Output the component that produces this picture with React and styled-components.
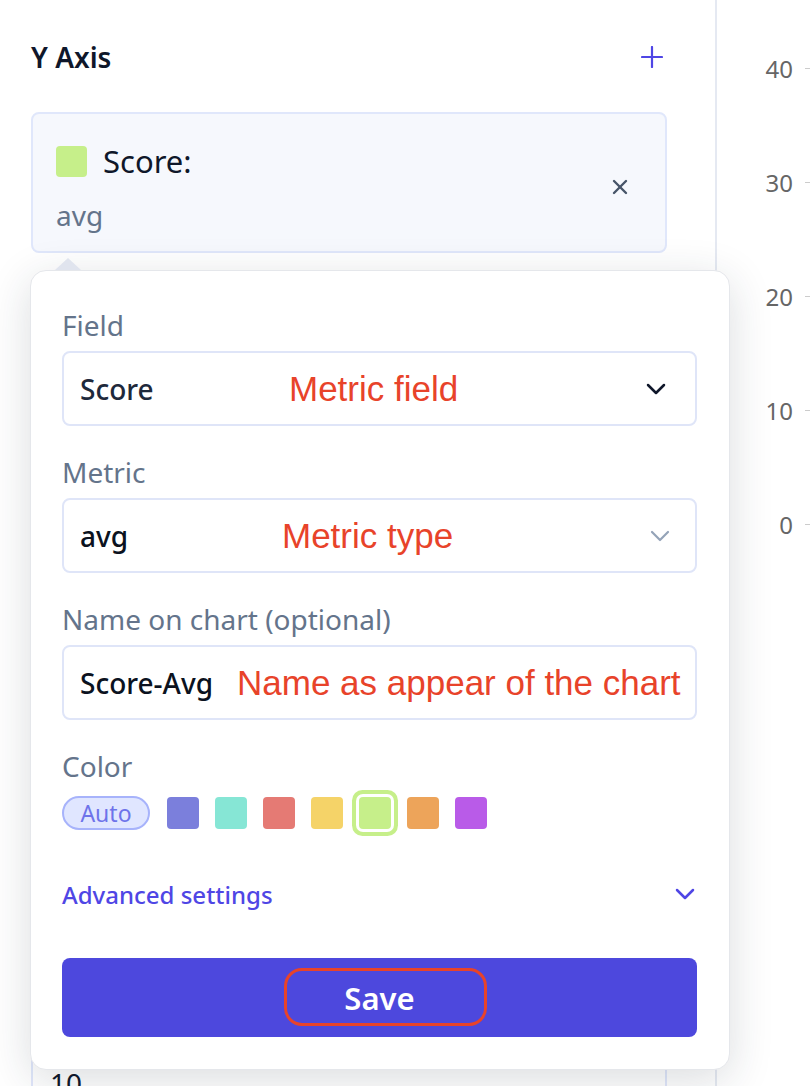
import React from 'react';
import styled, { createGlobalStyle } from 'styled-components';

const GlobalStyle = createGlobalStyle`
  html, body {
    margin: 0;
    padding: 0;
    background: #ffffff;
    font-family: 'Noto Sans', 'Open Sans', sans-serif;
    overflow: hidden;
  }
  * {
    box-sizing: border-box;
  }
`;

const Page = styled.div`
  display: flex;
  width: 810px;
  height: 1086px;
  overflow: hidden;
`;

const Sidebar = styled.div`
  width: 717px;
  flex-shrink: 0;
  display: flex;
  flex-direction: column;
  padding: 39px 48px 0 31px;
  border-right: 2px solid #e5e9f2;
`;

const Header = styled.div`
  display: flex;
  align-items: center;
  justify-content: space-between;
  height: 36px;
  padding-right: 4px;
`;

const Title = styled.div`
  font-size: 28px;
  font-weight: 600;
  color: #0f172a;
  line-height: 36px;
`;

const IconButton = styled.button`
  display: flex;
  align-items: center;
  justify-content: center;
  border: none;
  background: transparent;
  padding: 0;
  cursor: pointer;
  color: ${({ color }) => color || '#475569'};
`;

const SeriesSlot = styled.div`
  position: relative;
  margin-top: 37px;
`;

const SeriesCard = styled.div`
  display: flex;
  align-items: center;
  justify-content: space-between;
  background: #f6f8fd;
  border: 2px solid #e0e7fb;
  border-radius: 8px;
  padding: 26px 37px 18px 23px;
`;

const SeriesInfo = styled.div`
  display: flex;
  flex-direction: column;
  gap: 15px;
`;

const SeriesRow = styled.div`
  display: flex;
  align-items: center;
  gap: 16px;
  height: 42px;
`;

const Swatch = styled.span`
  display: block;
  width: ${({ size }) => size || 32}px;
  height: ${({ size }) => size || 32}px;
  border-radius: 4px;
  background: ${({ color }) => color};
  box-shadow: ${({ selected, color }) =>
    selected ? `0 0 0 3px #ffffff, 0 0 0 7px ${color}` : 'none'};
  flex-shrink: 0;
`;

const SeriesName = styled.span`
  font-size: 31px;
  font-weight: 400;
  color: #0f172a;
`;

const SeriesMetric = styled.span`
  font-size: 28px;
  line-height: 36px;
  color: #64748b;
`;

const Popover = styled.div`
  position: absolute;
  top: calc(100% + 17px);
  left: -1px;
  width: 700px;
  background: #ffffff;
  border: 1px solid #e5e7eb;
  border-radius: 16px;
  box-shadow: 0 10px 44px rgba(30, 41, 59, 0.16);
  padding: 36px 32px 32px 31px;
  display: flex;
  flex-direction: column;
  z-index: 2;
`;

const Arrow = styled.span`
  position: absolute;
  top: -13px;
  left: 24px;
  width: 0;
  height: 0;
  border-left: 13px solid transparent;
  border-right: 13px solid transparent;
  border-bottom: 12px solid #e0e4ee;
`;

const Group = styled.div`
  display: flex;
  flex-direction: column;
  gap: ${({ gap }) => gap || 8}px;
  margin-bottom: ${({ last }) => (last ? 0 : 28)}px;
`;

const Label = styled.div`
  font-size: 28px;
  line-height: 36px;
  color: #64748b;
`;

const Control = styled.div`
  position: relative;
  display: flex;
  align-items: center;
  justify-content: space-between;
  height: 75px;
  border: 2px solid #dfe5f8;
  border-radius: 8px;
  padding: 0 ${({ padRight }) => padRight || 29}px 0 16px;
`;

const Value = styled.span`
  font-size: 28px;
  font-weight: 500;
  color: ${({ dark }) => (dark ? '#0b1220' : '#1e293b')};
`;

const Note = styled.span`
  position: absolute;
  left: ${({ left }) => left}px;
  top: 50%;
  transform: translateY(-50%);
  font-family: 'Liberation Sans', Arial, sans-serif;
  font-size: 35px;
  color: #e8432a;
  white-space: nowrap;
`;

const SwatchRow = styled.div`
  display: flex;
  align-items: center;
  gap: 16px;
  height: 34px;
  margin-top: 2px;
`;

const AutoPill = styled.span`
  display: flex;
  align-items: center;
  justify-content: center;
  width: 88px;
  height: 34px;
  margin-right: 1px;
  border-radius: 17px;
  background: #e0e6ff;
  border: 2px solid #a7b3fb;
  font-size: 23px;
  color: #6e73ea;
`;

const Advanced = styled.div`
  display: flex;
  align-items: center;
  justify-content: space-between;
  height: 36px;
  margin-top: 46px;
  padding-right: 2px;
  color: #4f46e5;
  font-size: 24px;
  font-weight: 500;
`;

const SaveButton = styled.button`
  position: relative;
  margin-top: 46px;
  height: 79px;
  width: 100%;
  border: none;
  border-radius: 8px;
  background: #4d48dd;
  color: #ffffff;
  font-family: 'Noto Sans', sans-serif;
  font-size: 31px;
  font-weight: 600;
  cursor: pointer;
`;

const SaveMark = styled.span`
  position: absolute;
  left: 222px;
  top: 10px;
  width: 203px;
  height: 58px;
  border: 3px solid #e8432a;
  border-radius: 18px;
`;

const NextCard = styled.div`
  margin-top: 790px;
  border: 2px solid #e0e7fb;
  border-radius: 8px;
  padding: 20px 17px;
  font-size: 28px;
  line-height: 36px;
  color: #0f172a;
`;

const AxisColumn = styled.div`
  flex: 1;
  display: flex;
  flex-direction: column;
  padding-top: 11px;
`;

const Tick = styled.div`
  display: flex;
  align-items: center;
  justify-content: flex-end;
  gap: 12px;
  height: 114px;
  font-size: 24px;
  color: #666666;
  &::after {
    content: '';
    display: block;
    width: 5px;
    height: 1px;
    background: #cccccc;
  }
`;

const Plus = () => (
  <svg width="22" height="22" viewBox="0 0 22 22" fill="none" stroke="currentColor" strokeWidth="2.2" strokeLinecap="round">
    <line x1="11" y1="1" x2="11" y2="21" />
    <line x1="1" y1="11" x2="21" y2="11" />
  </svg>
);

const Close = () => (
  <svg width="16" height="16" viewBox="0 0 16 16" fill="none" stroke="currentColor" strokeWidth="2.4" strokeLinecap="round">
    <line x1="2" y1="2" x2="14" y2="14" />
    <line x1="14" y1="2" x2="2" y2="14" />
  </svg>
);

const Chevron = ({ color, width = 2.5 }) => (
  <svg width="20" height="12" viewBox="0 0 20 12" fill="none" stroke={color} strokeWidth={width} strokeLinecap="round" strokeLinejoin="round">
    <polyline points="2,2 10,10 18,2" />
  </svg>
);

const palette = ['#7b7fdc', '#86e6d5', '#e57a74', '#f5d368', '#c6ef8a', '#eda45a', '#b95be8'];
const ticks = [40, 30, 20, 10, 0];

const App = () => {
  return (
    <>
      <GlobalStyle />
      <Page>
        <Sidebar>
          <Header>
            <Title>Y Axis</Title>
            <IconButton color="#4f46e5">
              <Plus />
            </IconButton>
          </Header>

          <SeriesSlot>
            <SeriesCard>
              <SeriesInfo>
                <SeriesRow>
                  <Swatch color="#c6ef8a" size={31} />
                  <SeriesName>Score:</SeriesName>
                </SeriesRow>
                <SeriesMetric>avg</SeriesMetric>
              </SeriesInfo>
              <IconButton color="#475569">
                <Close />
              </IconButton>
            </SeriesCard>

            <Popover>
              <Arrow />
              <Group>
                <Label>Field</Label>
                <Control padRight={29}>
                  <Value>Score</Value>
                  <Note left={225}>Metric field</Note>
                  <Chevron color="#0f172a" />
                </Control>
              </Group>
              <Group>
                <Label>Metric</Label>
                <Control padRight={25}>
                  <Value dark>avg</Value>
                  <Note left={218}>Metric type</Note>
                  <Chevron color="#94a3b8" width={2.2} />
                </Control>
              </Group>
              <Group>
                <Label>Name on chart (optional)</Label>
                <Control>
                  <Value dark>Score-Avg</Value>
                  <Note left={173}>Name as appear of the chart</Note>
                </Control>
              </Group>
              <Group gap={10} last>
                <Label>Color</Label>
                <SwatchRow>
                  <AutoPill>Auto</AutoPill>
                  {palette.map((c) => (
                    <Swatch key={c} color={c} selected={c === '#c6ef8a'} />
                  ))}
                </SwatchRow>
              </Group>
              <Advanced>
                <span>Advanced settings</span>
                <Chevron color="#4f46e5" />
              </Advanced>
              <SaveButton>
                Save
                <SaveMark />
              </SaveButton>
            </Popover>
          </SeriesSlot>

          <NextCard>10</NextCard>
        </Sidebar>

        <AxisColumn>
          {ticks.map((t) => (
            <Tick key={t}>{t}</Tick>
          ))}
        </AxisColumn>
      </Page>
    </>
  );
};

export default App;
